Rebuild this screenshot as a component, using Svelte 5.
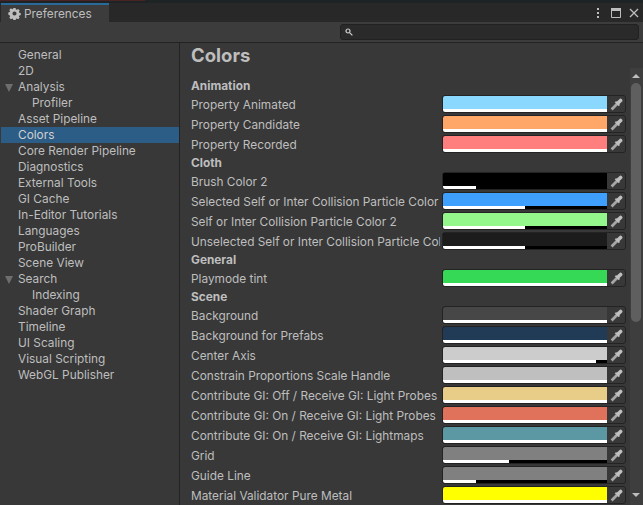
<script>
  const nav = [
    { t: 'General' }, { t: '2D' }, { t: 'Analysis', open: true }, { t: 'Profiler', sub: true },
    { t: 'Asset Pipeline' }, { t: 'Colors', sel: true }, { t: 'Core Render Pipeline' }, { t: 'Diagnostics' },
    { t: 'External Tools' }, { t: 'GI Cache' }, { t: 'In-Editor Tutorials' }, { t: 'Languages' },
    { t: 'ProBuilder' }, { t: 'Scene View' }, { t: 'Search', open: true }, { t: 'Indexing', sub: true },
    { t: 'Shader Graph' }, { t: 'Timeline' }, { t: 'UI Scaling' }, { t: 'Visual Scripting' }, { t: 'WebGL Publisher' }
  ];
  const groups = [
    { h: 'Animation', rows: [
      ['Property Animated', '#8bd8ff', 100],
      ['Property Candidate', '#ffa768', 100],
      ['Property Recorded', '#ff7e7e', 100]
    ]},
    { h: 'Cloth', rows: [
      ['Brush Color 2', '#000000', 20],
      ['Selected Self or Inter Collision Particle Color', '#3f9fff', 50],
      ['Self or Inter Collision Particle Color 2', '#94f78c', 50],
      ['Unselected Self or Inter Collision Particle Color', '#1c1c1c', 50]
    ]},
    { h: 'General', rows: [
      ['Playmode tint', '#36d955', 100]
    ]},
    { h: 'Scene', rows: [
      ['Background', '#474747', 100],
      ['Background for Prefabs', '#213a56', 100],
      ['Center Axis', '#cccccc', 93],
      ['Constrain Proportions Scale Handle', '#bfbfbf', 100],
      ['Contribute GI: Off / Receive GI: Light Probes', '#e8cd88', 100],
      ['Contribute GI: On / Receive GI: Light Probes', '#e0725c', 100],
      ['Contribute GI: On / Receive GI: Lightmaps', '#5b98a3', 100],
      ['Grid', '#808080', 40],
      ['Guide Line', '#808080', 20],
      ['Material Validator Pure Metal', '#ffff00', 100]
    ]}
  ];
</script>

{#snippet dropper()}
  <svg class="drop" width="13" height="13" viewBox="0 0 13 13" aria-hidden="true">
    <path d="M1.6 11.4 L7 6" stroke="#a6a6a6" stroke-width="2.8" fill="none" />
    <path d="M5.4 3.6 L9.4 7.6" stroke="#b4b4b4" stroke-width="2" fill="none" />
    <path d="M8 5 L10.6 2.4" stroke="#c0c0c0" stroke-width="3.6" stroke-linecap="round" fill="none" />
  </svg>
{/snippet}

<div class="win">
  <div class="topstrip"><span class="red"></span></div>
  <div class="tabbar">
    <div class="tab">
      <svg width="13" height="13" viewBox="0 0 14 14" aria-hidden="true">
        <path fill="#bebebe" fill-rule="evenodd" d="M5.8 1h2.4l.3 1.6 1 .4 1.4-.9 1.7 1.7-.9 1.4.4 1 1.6.3v2.4l-1.6.3-.4 1 .9 1.4-1.7 1.7-1.4-.9-1 .4-.3 1.6H5.8l-.3-1.6-1-.4-1.4.9-1.7-1.7.9-1.4-.4-1L.3 8.2V5.8l1.6-.3.4-1-.9-1.4 1.7-1.7 1.4.9 1-.4zM7 4.8a2.2 2.2 0 1 0 0 4.4 2.2 2.2 0 0 0 0-4.4z"/>
      </svg>
      <span>Preferences</span>
    </div>
    <div class="winbtns">
      <svg class="dots" width="4" height="12" viewBox="0 0 4 12" aria-hidden="true"><g fill="#bebebe"><rect x="1" y="1" width="2" height="2"/><rect x="1" y="5" width="2" height="2"/><rect x="1" y="9" width="2" height="2"/></g></svg>
      <svg width="11" height="10" viewBox="0 0 11 10" aria-hidden="true"><path fill="none" stroke="#bebebe" d="M.5 1.5h9v8h-9z"/><rect y="0" width="10" height="3" fill="#bebebe"/></svg>
      <svg width="10" height="10" viewBox="0 0 10 10" aria-hidden="true"><path stroke="#bebebe" stroke-width="1.3" d="M1 1l8 8M9 1L1 9"/></svg>
    </div>
  </div>
  <div class="toolbar">
    <div class="search">
      <svg width="8" height="8" viewBox="0 0 8 8" aria-hidden="true"><circle cx="3" cy="3" r="2" fill="none" stroke="#d0d0d0" stroke-width="1.2"/><path d="M4.6 4.6 7.4 7.4" stroke="#d0d0d0" stroke-width="1.2"/></svg>
    </div>
  </div>
  <div class="body">
    <nav class="side">
      {#each nav as n}
        <div class="item" class:sel={n.sel} class:sub={n.sub}>
          {#if n.open}<span class="tri"></span>{/if}
          {n.t}
        </div>
      {/each}
    </nav>
    <main class="main">
      <h1>Colors</h1>
      {#each groups as g}
        <div class="ghead">{g.h}</div>
        {#each g.rows as r}
          <div class="row">
            <div class="label">{r[0]}</div>
            <div class="field">
              <div class="swatch">
                <div class="col" style:background={r[1]}></div>
                <div class="alpha"><div class="fill" style:width="{r[2]}%"></div></div>
              </div>
              <div class="pick">{@render dropper()}</div>
            </div>
          </div>
        {/each}
      {/each}
    </main>
    <div class="scroll">
      <span class="up"></span>
      <div class="thumb"></div>
      <span class="down"></span>
    </div>
  </div>
</div>

<style>
  :global(body) { margin: 0; background: #383838; }
  .win {
    width: 643px; height: 505px; overflow: hidden; display: flex; flex-direction: column;
    background: #383838; color: #bebebe;
    font-family: Inter, "Liberation Sans", sans-serif; font-size: 11.85px;
  }
  .topstrip { height: 3px; background: #1e2326; flex: none; }
  .red { display: block; width: 145px; height: 1px; background: #4a2222; }
  .tabbar { height: 19px; flex: none; background: #282828; display: flex; justify-content: space-between; }
  .tab {
    width: 108px; margin-left: 1px; box-sizing: border-box; display: flex; align-items: center; gap: 3px;
    padding: 0 0 0 7px; background: #3c3c3c; border-top: 2px solid #2a6a99;
  }
  .winbtns { display: flex; align-items: center; gap: 7px; padding-right: 4px; }
  .dots { margin-right: 4px; }
  .toolbar {
    height: 20px; flex: none; background: #3c3c3c; border-bottom: 1px solid #232323;
    display: flex; align-items: center; justify-content: flex-end; padding-right: 4px;
  }
  .search {
    width: 299px; height: 16px; box-sizing: border-box; background: #2a2a2a; border: 1px solid #212121;
    border-radius: 3px; display: flex; align-items: center; padding-left: 4px;
  }
  .body { flex: 1; display: flex; min-height: 0; }
  .side { width: 179px; flex: none; padding-top: 4px; border-right: 1px solid #232323; }
  .item { height: 16px; line-height: 16px; padding-left: 18px; position: relative; white-space: nowrap; }
  .item.sub { padding-left: 32px; }
  .item.sel { background: #2c5d87; margin-left: 1px; padding-left: 17px; color: #d0d0d0; }
  .tri {
    position: absolute; left: 5px; top: 5px; width: 0; height: 0;
    border-left: 4.5px solid transparent; border-right: 4.5px solid transparent; border-top: 8px solid #6e6e6e;
  }
  .main { width: 450px; flex: none; padding: 0 0 0 11px; box-sizing: border-box; overflow: hidden; }
  h1 { margin: 0; height: 34px; box-sizing: border-box; font-size: 18.5px; line-height: 24px; font-weight: 700; color: #bebebe; }
  .ghead { height: 17px; line-height: 19px; font-weight: 700; color: #bebebe; }
  .row { height: 20px; display: flex; align-items: center; }
  .label { width: 249px; margin-right: 2px; padding-top: 1px; flex: none; overflow: hidden; white-space: nowrap; }
  .field {
    width: 184px; height: 18px; box-sizing: border-box; display: flex; flex: none;
    background: #2b2b2b; border: 1px solid #232323; border-radius: 3px; overflow: hidden;
  }
  .swatch { width: 164px; flex: none; display: flex; flex-direction: column; background: #000; }
  .col { height: 13px; flex: none; }
  .alpha { height: 3px; flex: none; background: #000; }
  .fill { height: 3px; background: #fff; }
  .pick { flex: 1; background: #383838; display: flex; align-items: center; justify-content: center; }
  .drop { display: block; }
  .scroll { flex: 1; position: relative; background: #3e3e3e; margin-top: 25px; }
  .thumb { position: absolute; left: 1px; top: 15px; width: 10px; height: 239px; background: #5f5f5f; border-radius: 5px; }
  .up, .down { position: absolute; left: 2px; width: 0; height: 0; border-left: 4px solid transparent; border-right: 4px solid transparent; }
  .up { top: 6px; border-bottom: 4px solid #bebebe; }
  .down { top: 425px; border-top: 4px solid #bebebe; }
</style>
